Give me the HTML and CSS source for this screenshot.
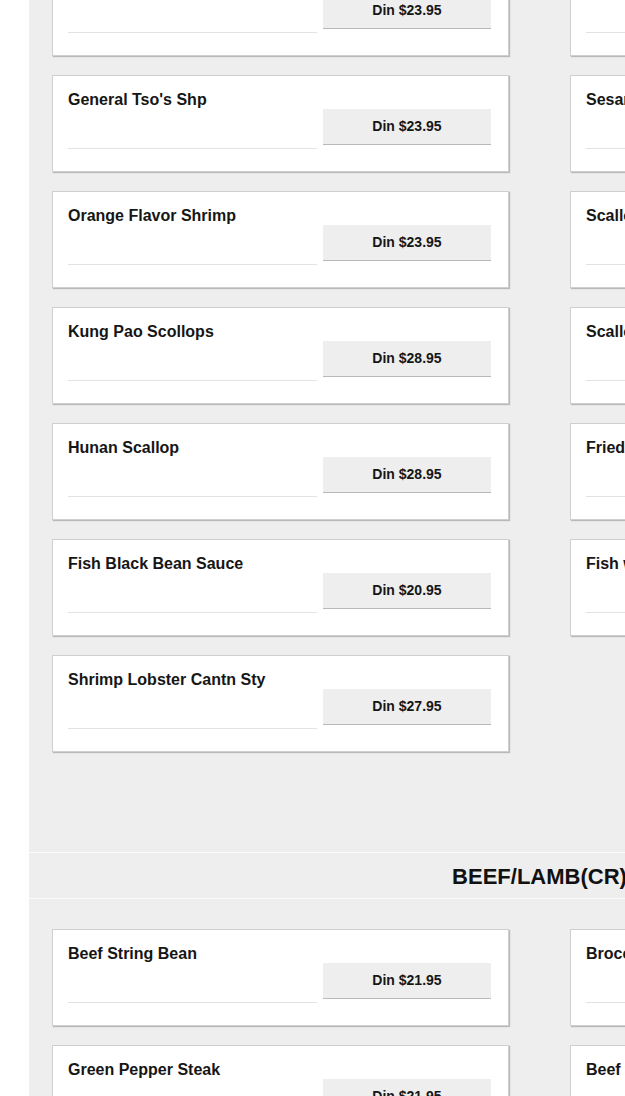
FILE: index.html
```html
<!DOCTYPE html>
<html lang="en">
<head>
    <meta charset="UTF-8">
    <meta name="viewport" content="width=device-width, initial-scale=1.0">
    <title>Menu</title>
    <link rel="stylesheet" href="styles.css">
</head>
<body>

    <div class="menu">
        <!-- seafood -->
        <div class="item-grid">
            <div class="item">
                <div class="info"><div class="name">Shrimp w. Garlic Sauce</div><div class="desc"></div></div>
                <div class="price">Din $23.95</div>
            </div>
            <div class="item">
                <div class="info"><div class="name">Shrimp w. Broccoli</div><div class="desc"></div></div>
                <div class="price">Din $23.95</div>
            </div>

            <div class="item">
                <div class="info"><div class="name">General Tso's Shp</div><div class="desc"></div></div>
                <div class="price">Din $23.95</div>
            </div>
            <div class="item">
                <div class="info"><div class="name">Sesame Shrimp</div><div class="desc"></div></div>
                <div class="price">Din $23.95</div>
            </div>

            <div class="item">
                <div class="info"><div class="name">Orange Flavor Shrimp</div><div class="desc"></div></div>
                <div class="price">Din $23.95</div>
            </div>
            <div class="item">
                <div class="info"><div class="name">Scallops w. Garlic Sauce</div><div class="desc"></div></div>
                <div class="price">Din $28.95</div>
            </div>

            <div class="item">
                <div class="info"><div class="name">Kung Pao Scollops</div><div class="desc"></div></div>
                <div class="price">Din $28.95</div>
            </div>
            <div class="item">
                <div class="info"><div class="name">Scallops w. Broccoli</div><div class="desc"></div></div>
                <div class="price">Din $28.95</div>
            </div>

            <div class="item">
                <div class="info"><div class="name">Hunan Scallop</div><div class="desc"></div></div>
                <div class="price">Din $28.95</div>
            </div>
            <div class="item">
                <div class="info"><div class="name">Fried Shrimp</div><div class="desc"></div></div>
                <div class="price">Din $20.95</div>
            </div>

            <div class="item">
                <div class="info"><div class="name">Fish Black Bean Sauce</div><div class="desc"></div></div>
                <div class="price">Din $20.95</div>
            </div>
            <div class="item">
                <div class="info"><div class="name">Fish w. Broccoli</div><div class="desc"></div></div>
                <div class="price">Din $20.95</div>
            </div>

            <div class="item">
                <div class="info"><div class="name">Shrimp Lobster Cantn Sty</div><div class="desc"></div></div>
                <div class="price">Din $27.95</div>
            </div>
        </div>

        <div class="category">BEEF/LAMB(CR)</div>

        <!-- beef / lamb -->
        <div class="item-grid">
            <div class="item">
                <div class="info"><div class="name">Beef String Bean</div><div class="desc"></div></div>
                <div class="price">Din $21.95</div>
            </div>
            <div class="item">
                <div class="info"><div class="name">Broccoli Beef</div><div class="desc"></div></div>
                <div class="price">Din $21.95</div>
            </div>

            <div class="item">
                <div class="info"><div class="name">Green Pepper Steak</div><div class="desc"></div></div>
                <div class="price">Din $21.95</div>
            </div>
            <div class="item">
                <div class="info"><div class="name">Beef w. Mixed Vegetables</div><div class="desc"></div></div>
                <div class="price">Din $21.95</div>
            </div>
        </div>
    </div>

</body>
</html>
```

FILE: styles.css
```css
body {
    font-family: "Liberation Sans", Arial, sans-serif;
    background-color: #fff;
    color: #161616;
    margin: 0;
    padding: 0;
    overflow: hidden;
}
.menu {
    width: 1021px;
    margin: -41px 0 0 29px; /* page is scrolled into the seafood list */
    padding: 0 23px 40px;
    box-sizing: border-box;
    background-color: #eee;
}
.item-grid {
    display: grid;
    grid-template-columns: 457px 457px;
    column-gap: 61px;
    row-gap: 19px;
    margin-bottom: 100px;
}
.category + .item-grid {
    margin-top: 30px;
}
.item {
    display: flex;
    gap: 6px;
    padding: 15px 17px 22px 15px;
    background-color: #fff;
    border: 1px solid #cfcfcf;
    box-shadow: 1px 1px 1px rgba(0, 0, 0, 0.22);
    align-items: flex-start;
}
.info {
    flex-grow: 1;
}
.name {
    font-size: 16px;
    line-height: 18px;
    font-weight: bold;
    white-space: nowrap;
}
.desc {
    height: 39px;
    border-bottom: 1px solid #e2e2e2;
}
.price {
    flex: 0 0 168px;
    margin-top: 18px;
    height: 35px;
    line-height: 35px;
    text-align: center;
    font-size: 14px;
    font-weight: bold;
    background-color: #eee;
    border-bottom: 1px solid #b9b9b9;
}
.category {
    margin: 0 -23px;
    height: 45px;
    line-height: 47px;
    text-align: center;
    font-size: 22px;
    font-weight: bold;
    color: #111;
    border-top: 1px solid #fafafa;
    border-bottom: 1px solid #fafafa;
}
```
